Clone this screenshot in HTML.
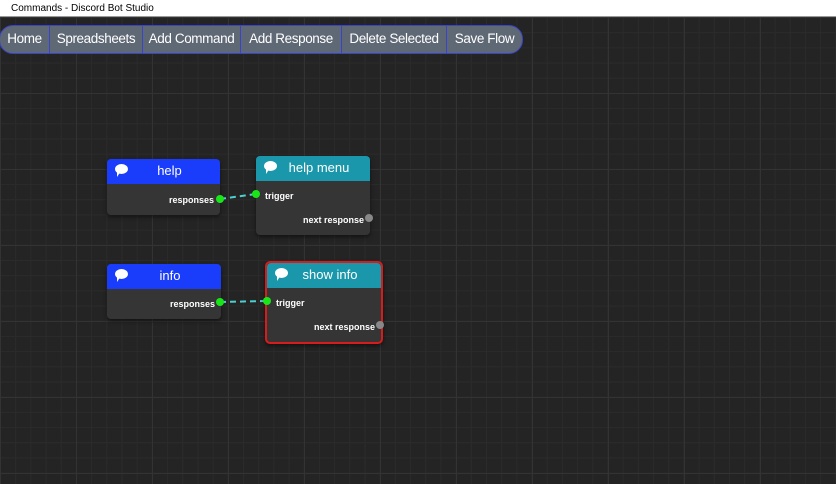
<!DOCTYPE html>
<html><head><style>
*{margin:0;padding:0;box-sizing:border-box}
body{width:836px;height:484px;overflow:hidden;font-family:"Liberation Sans",Arial,sans-serif;position:relative;background:#222222}
.title{position:absolute;left:0;top:0;width:836px;height:17px;background:#fff;font-size:10px;color:#000;padding:3px 0 0 11px;border-bottom:1px solid #999}
.canvas{position:absolute;left:0;top:17px;width:836px;height:467px;background-color:#242424;
background-image:linear-gradient(#333 1px,transparent 1px),linear-gradient(90deg,#333 1px,transparent 1px),linear-gradient(#2b2b2b 1px,transparent 1px),linear-gradient(90deg,#2b2b2b 1px,transparent 1px);
background-size:76px 76px,76px 76px,15.2px 15.2px,15.2px 15.2px;background-position:0 0}
.bar{position:absolute;left:-1px;top:25px;height:29px;display:flex;background:#5f6875;border:1.5px solid #3a44c8;border-radius:14px;overflow:hidden}
.bar div{color:#fff;font-size:13.5px;letter-spacing:-0.4px;line-height:26px;text-align:center;border-right:1px solid #3a44c8;white-space:nowrap}
.bar div:last-child{border-right:none}
.node{position:absolute;background:#353535;border-radius:4px;box-shadow:0 2px 4px rgba(0,0,0,.5)}
.hd{height:25px;color:#fff;font-size:13px;text-align:center;line-height:24px;border-radius:4px 4px 0 0;position:relative;padding-left:12px}
.blue{background:#1a3cfb}.teal{background:#1b97ab}
.ic{position:absolute;left:8px;top:5px;width:13px;height:10px;background:#fff;border-radius:50%}
.ic:after{content:"";position:absolute;left:2px;bottom:-3px;border:3px solid transparent;border-top:4px solid #fff;border-left:2px solid #fff}
.lbl{position:absolute;color:#fff;font-size:9px;font-weight:bold}
.dot{position:absolute;width:8px;height:8px;border-radius:50%}
.g{background:#19e619}.gr{background:#888}
</style></head><body>
<div class="title">Commands - Discord Bot Studio</div>
<div class="canvas"></div>
<div class="bar"><div style="width:50px">Home</div><div style="width:93px">Spreadsheets</div><div style="width:98px">Add Command</div><div style="width:101px">Add Response</div><div style="width:105px">Delete Selected</div><div style="width:75px">Save Flow</div></div>
<svg style="position:absolute;left:0;top:0" width="836" height="484"><path d="M220 199 L256 194" stroke="#4ecfcf" stroke-width="2" stroke-dasharray="6,4"/><path d="M220 302 L266 301" stroke="#4ecfcf" stroke-width="2" stroke-dasharray="6,4"/></svg>
<div class="node" style="left:107px;top:159px;width:113px;height:56px"><div class="hd blue"><span class="ic"></span>help</div></div>
<div class="lbl" style="left:169px;top:195px">responses</div><div class="dot g" style="left:216px;top:195px"></div>
<div class="node" style="left:256px;top:156px;width:114px;height:79px"><div class="hd teal"><span class="ic"></span>help menu</div></div>
<div class="lbl" style="left:265px;top:191px">trigger</div><div class="dot g" style="left:252px;top:190px"></div>
<div class="lbl" style="left:303px;top:215px">next response</div><div class="dot gr" style="left:365px;top:214px"></div>
<div class="node" style="left:107px;top:264px;width:114px;height:55px"><div class="hd blue"><span class="ic"></span>info</div></div>
<div class="lbl" style="left:170px;top:299px">responses</div><div class="dot g" style="left:216px;top:298px"></div>
<div class="node" style="left:265px;top:261px;width:118px;height:83px;border:2px solid #d81b1b;border-radius:5px"><div class="hd teal"><span class="ic"></span>show info</div></div>
<div class="lbl" style="left:276px;top:298px">trigger</div><div class="dot g" style="left:263px;top:297px"></div>
<div class="lbl" style="left:314px;top:322px">next response</div><div class="dot gr" style="left:376px;top:321px"></div>
</body></html>
